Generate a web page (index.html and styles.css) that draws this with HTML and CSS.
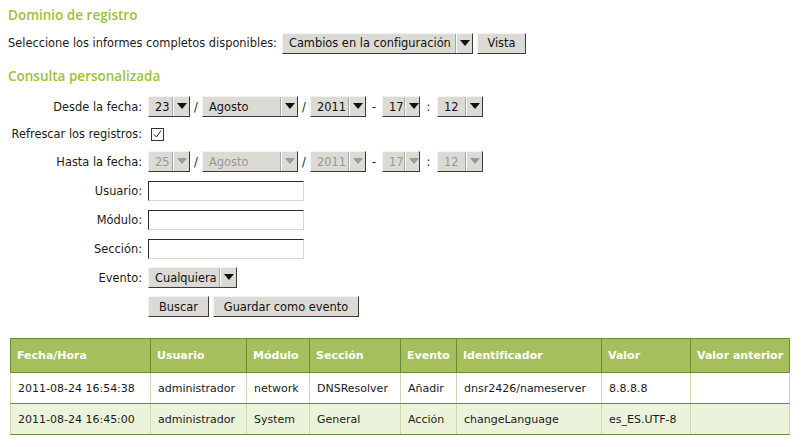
FILE: index.html
```html
<!DOCTYPE html>
<html lang="es">
<head>
<meta charset="utf-8">
<title>Dominio de registro</title>
<link rel="stylesheet" href="styles.css">
</head>
<body>
<h3 class="title">Dominio de registro</h3>
<div class="report-line">
  <span>Seleccione los informes completos disponibles:</span>
  <span class="sel sel-report"><span class="val">Cambios en la configuración</span><span class="arr"></span></span>
  <span class="btn">Vista</span>
</div>
<h3 class="title title2">Consulta personalizada</h3>
<div class="form">
  <label class="lbl">Desde la fecha:</label>
  <div class="ctl date">
    <span class="sel s-day"><span class="val">23</span><span class="arr"></span></span><span class="sep">/</span>
    <span class="sel s-month"><span class="val">Agosto</span><span class="arr"></span></span><span class="sep">/</span>
    <span class="sel s-year"><span class="val">2011</span><span class="arr"></span></span><span class="sep sep-dash">-</span>
    <span class="sel s-hour"><span class="val">17</span><span class="arr"></span></span><span class="sep sep-colon">:</span>
    <span class="sel s-min"><span class="val">12</span><span class="arr"></span></span>
  </div>
  <label class="lbl">Refrescar los registros:</label>
  <div class="ctl ctl-check"><span class="check"><svg width="9" height="8" viewBox="0 0 9 8"><path d="M1 4.5 L3.5 7 L8 0.5" fill="none" stroke="#222" stroke-width="1"/></svg></span></div>
  <label class="lbl">Hasta la fecha:</label>
  <div class="ctl date disabled">
    <span class="sel s-day"><span class="val">25</span><span class="arr"></span></span><span class="sep">/</span>
    <span class="sel s-month"><span class="val">Agosto</span><span class="arr"></span></span><span class="sep">/</span>
    <span class="sel s-year"><span class="val">2011</span><span class="arr"></span></span><span class="sep sep-dash">-</span>
    <span class="sel s-hour"><span class="val">17</span><span class="arr"></span></span><span class="sep sep-colon">:</span>
    <span class="sel s-min"><span class="val">12</span><span class="arr"></span></span>
  </div>
  <label class="lbl">Usuario:</label>
  <div class="ctl"><span class="input"></span></div>
  <label class="lbl">Módulo:</label>
  <div class="ctl"><span class="input"></span></div>
  <label class="lbl">Sección:</label>
  <div class="ctl"><span class="input"></span></div>
  <label class="lbl">Evento:</label>
  <div class="ctl"><span class="sel s-event"><span class="val">Cualquiera</span><span class="arr"></span></span></div>
  <span class="lbl"></span>
  <div class="ctl buttons"><span class="btn btn-buscar">Buscar</span><span class="btn btn-guardar">Guardar como evento</span></div>
</div>
<table class="log">
  <thead>
    <tr><th class="c1">Fecha/Hora</th><th class="c2">Usuario</th><th class="c3">Módulo</th><th class="c4">Sección</th><th class="c5">Evento</th><th class="c6">Identificador</th><th class="c7">Valor</th><th class="c8">Valor anterior</th></tr>
  </thead>
  <tbody>
    <tr><td>2011-08-24 16:54:38</td><td>administrador</td><td>network</td><td>DNSResolver</td><td>Añadir</td><td>dnsr2426/nameserver</td><td>8.8.8.8</td><td></td></tr>
    <tr class="alt"><td>2011-08-24 16:45:00</td><td>administrador</td><td>System</td><td>General</td><td>Acción</td><td>changeLanguage</td><td>es_ES.UTF-8</td><td></td></tr>
  </tbody>
</table>
</body>
</html>
```
FILE: styles.css
```css
* { box-sizing: border-box; }
body {
  margin: 0;
  padding: 0 8px;
  font-family: "DejaVu Sans", Verdana, sans-serif;
  font-size: 11.4px;
  color: #1a1a1a;
  background: #fff;
}
.title {
  margin: 0;
  padding-top: 6px;
  height: 27px;
  font-family: "Open Sans", "DejaVu Sans", sans-serif;
  font-weight: 600;
  font-size: 13.5px;
  color: #9dc13a;
  line-height: 18px;
}
.title2 { padding-top: 7px; height: 30px; }
.report-line {
  display: flex;
  align-items: center;
  height: 20px;
  margin-top: 6px;
  margin-bottom: 7px;
}
.report-line .sel-report { margin-left: 5px; width: 191px; }
.report-line .btn { margin-left: 4px; width: 49px; }
.sel {
  display: inline-flex;
  align-items: stretch;
  height: 21px;
  background: #dcdad5;
  border-top: 1px solid #f4f3f1;
  border-left: 1px solid #f4f3f1;
  border-right: 1px solid #3a3a3a;
  border-bottom: 1px solid #3a3a3a;
  color: #111;
}
.sel .val {
  flex: 1;
  display: flex;
  align-items: center;
  padding-left: 6px;
  white-space: nowrap;
}
.sel .arr {
  width: 17px;
  border-left: 1px solid #a8a69f;
  box-shadow: inset 1px 0 0 #fff;
  position: relative;
}
.sel .arr::after {
  content: "";
  position: absolute;
  left: 4px;
  top: 6px;
  border-left: 5px solid transparent;
  border-right: 5px solid transparent;
  border-top: 6px solid #111;
}
.btn {
  display: inline-flex;
  align-items: center;
  justify-content: center;
  height: 21px;
  background: #dcdad5;
  border-top: 1px solid #f4f3f1;
  border-left: 1px solid #f4f3f1;
  border-right: 1px solid #3a3a3a;
  border-bottom: 1px solid #3a3a3a;
  color: #111;
  white-space: nowrap;
}
.form {
  display: grid;
  grid-template-columns: 134px auto;
  column-gap: 6px;
  row-gap: 8px;
  align-items: center;
  margin-top: 6px;
}
.lbl {
  text-align: right;
  white-space: nowrap;
}
.ctl {
  display: flex;
  align-items: center;
  height: 21px;
}
.ctl-check { height: 18px; }
.date .sep { width: 12px; text-align: center; }
.date .sep-dash { width: 16px; }
.date .sep-colon { width: 17px; }
.s-day { width: 42px; }
.s-month { width: 96px; }
.s-year { width: 56px; }
.s-hour { width: 38px; }
.s-min { width: 46px; }
.s-event { width: 89px; }
.disabled .sel { color: #9a9893; }
.disabled .sel .arr::after { border-top-color: #9a9893; }
.disabled .sep { color: #1a1a1a; }
.check {
  margin-left: 3px;
  width: 13px;
  height: 13px;
  border: 1px solid #333;
  display: flex;
  align-items: center;
  justify-content: center;
  background: #fff;
}
.input {
  display: block;
  width: 156px;
  height: 20px;
  border-top: 1px solid #2a2a2a;
  border-left: 1px solid #2a2a2a;
  border-right: 1px solid #d8d6d0;
  border-bottom: 1px solid #d8d6d0;
  background: #fff;
}
.buttons .btn-buscar { width: 61px; }
.buttons .btn-guardar { width: 146px; margin-left: 4px; }
.log {
  margin: 21px 0 0 2px;
  width: 779px;
  table-layout: fixed;
  border-collapse: collapse;
  font-size: 11px;
}
.log th {
  background: #a4bf5c;
  color: #fff;
  font-weight: bold;
  font-size: 11px;
  text-align: left;
  height: 34px;
  padding: 0 6px;
  border: 1px solid #6c8b35;
  white-space: nowrap;
  overflow: hidden;
}
.log td {
  height: 31px;
  padding: 0 7px;
  border-left: 1px solid #cfdab0;
  border-right: 1px solid #cfdab0;
  border-bottom: 1px solid #6c8b35;
  white-space: nowrap;
  overflow: hidden;
}
.log tr.alt td { background: #ebf3da; }
.log .c1 { width: 140px; }
.log .c2 { width: 96px; }
.log .c3 { width: 63px; }
.log .c4 { width: 91px; }
.log .c5 { width: 56px; }
.log .c6 { width: 145px; }
.log .c7 { width: 89px; }
.log .c8 { width: 99px; }
```
